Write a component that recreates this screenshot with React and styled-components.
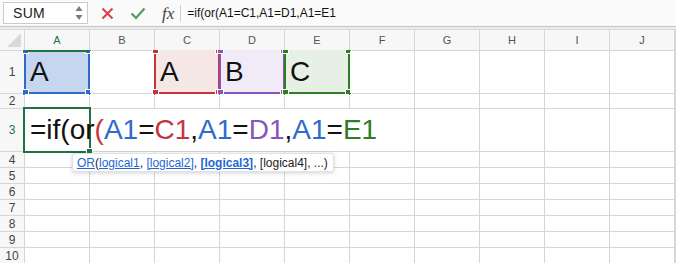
import React from 'react'
import styled, { createGlobalStyle, css } from 'styled-components'

const GlobalStyle = createGlobalStyle`
  html, body {
    margin: 0;
    padding: 0;
    background: #ffffff;
    font-family: "Liberation Sans", Arial, sans-serif;
    overflow: hidden;
  }
`;

const colors = {
  blue: '#2f6cc8',
  red: '#c8333b',
  purple: '#8656bd',
  green: '#2f7d24',
  active: '#1f7244',
};

const columns = ['A', 'B', 'C', 'D', 'E', 'F', 'G', 'H', 'I', 'J'];

function Range({ color, fill }) {
  return (
    <Highlight $color={color} $fill={fill}>
      <Handle $color={color} $v="top" $h="left" />
      <Handle $color={color} $v="top" $h="right" />
      <Handle $color={color} $v="bottom" $h="left" />
      <Handle $color={color} $v="bottom" $h="right" />
    </Highlight>
  );
}

function App() {
  return (
    <Page>
      <GlobalStyle />
      <FormulaBar>
        <NameBox>
          <span>SUM</span>
          <svg width="8" height="16" viewBox="0 0 8 16">
            <path d="M4 1 L7.5 6 L0.5 6 Z" fill="#7a7a7a" />
            <path d="M4 15 L7.5 10 L0.5 10 Z" fill="#7a7a7a" />
          </svg>
        </NameBox>
        <Actions>
          <svg width="13" height="13" viewBox="0 0 13 13">
            <path d="M1.5 1.5 L11.5 11.5 M11.5 1.5 L1.5 11.5" stroke="#d94147" strokeWidth="2" fill="none" />
          </svg>
          <svg width="16" height="13" viewBox="0 0 16 13">
            <path d="M1.5 6.5 L6 11 L14.5 1.5" stroke="#4f9d54" strokeWidth="2.2" fill="none" />
          </svg>
          <Fx>fx</Fx>
        </Actions>
        <FormulaInput>=if(or(A1=C1,A1=D1,A1=E1</FormulaInput>
      </FormulaBar>
      <Divider />
      <Sheet>
        <Corner>
          <svg width="16" height="16" viewBox="0 0 16 16">
            <path d="M15 1 L15 15 L1 15 Z" fill="#d9d9d9" />
          </svg>
        </Corner>
        {columns.map((c) => (
          <ColHeader key={c} $active={c === 'A'}>{c}</ColHeader>
        ))}

        <RowHeader>1</RowHeader>
        <Cell>
          <Range color={colors.blue} fill="#c6d6ef" />
          <BigText>A</BigText>
        </Cell>
        <Cell />
        <Cell>
          <Range color={colors.red} fill="#f6e7e7" />
          <BigText>A</BigText>
        </Cell>
        <Cell>
          <Range color={colors.purple} fill="#f0ebf7" />
          <BigText>B</BigText>
        </Cell>
        <Cell>
          <Range color={colors.green} fill="#e6f0e4" />
          <BigText>C</BigText>
        </Cell>
        {columns.slice(5).map((c) => <Cell key={c} />)}

        <RowHeader>2</RowHeader>
        {columns.map((c) => <Cell key={c} />)}

        <RowHeader $active>3</RowHeader>
        <OverflowCell>
          <ActiveBox>
            <Handle $color={colors.active} $v="bottom" $h="right" />
          </ActiveBox>
          <BigText>
            =if(or<C $c={colors.red}>(</C>
            <C $c={colors.blue}>A1</C>=<C $c={colors.red}>C1</C>,
            <C $c={colors.blue}>A1</C>=<C $c={colors.purple}>D1</C>,
            <C $c={colors.blue}>A1</C>=<C $c={colors.green}>E1</C>
          </BigText>
          <Tooltip>
            <Link>OR</Link>(<Link>logical1</Link>, <Link>[logical2]</Link>,{' '}
            <Link $bold>[logical3]</Link>, [logical4], ...)
          </Tooltip>
        </OverflowCell>
        {columns.slice(6).map((c) => <Cell key={c} />)}

        {[4, 5, 6, 7, 8, 9, 10].map((r) => (
          <React.Fragment key={r}>
            <RowHeader>{r}</RowHeader>
            {columns.map((c) => <Cell key={c} />)}
          </React.Fragment>
        ))}
      </Sheet>
    </Page>
  );
}

export default App

const Page = styled.div`
  width: 676px;
  height: 264px;
  overflow: hidden;
  background: #ffffff;
`;

const FormulaBar = styled.div`
  height: 27px;
  box-sizing: border-box;
  display: flex;
  align-items: center;
  padding: 0 0 0 3px;
  background: #fafafa;
  border-bottom: 1px solid #c4c4c4;
`;

const NameBox = styled.div`
  width: 85px;
  height: 22px;
  box-sizing: border-box;
  border: 1px solid #cbcbcb;
  background: #ffffff;
  display: flex;
  align-items: center;
  justify-content: space-between;
  padding: 0 4px 0 9px;
  font-size: 14px;
  letter-spacing: 0.3px;
  color: #222;
`;

const Actions = styled.div`
  display: flex;
  align-items: center;
  margin-left: 13px;
  height: 100%;

  svg:nth-child(1) { margin-right: 16px; }
  svg:nth-child(2) { margin-right: 16px; }
`;

const Fx = styled.span`
  font-family: "Liberation Serif", "Times New Roman", serif;
  font-style: italic;
  font-size: 17px;
  color: #444;
  padding-right: 6px;
  border-right: 1px solid #d0d0d0;
  line-height: 17px;
`;

const FormulaInput = styled.div`
  flex: 1;
  font-size: 12px;
  color: #111;
  padding-left: 6px;
`;

const Divider = styled.div`
  height: 2px;
  background: #ececec;
  border-bottom: 1px solid #d6d6d6;
`;

const Sheet = styled.div`
  display: grid;
  grid-template-columns: 24px repeat(10, 64px);
  grid-template-rows: 20px 42px 14px 42px repeat(7, 15px);
  gap: 1px;
  background: #d6d6d6;
  width: 676px;
`;

const headerBase = css`
  background: #f7f7f7;
  font-size: 11px;
  color: #555;
  display: flex;
  align-items: center;
`;

const Corner = styled.div`
  ${headerBase}
  align-items: flex-end;
  justify-content: flex-end;
  padding: 0 2px 2px 0;
  box-sizing: border-box;
`;

const ColHeader = styled.div`
  ${headerBase}
  justify-content: center;
  position: relative;
  z-index: 2;
  ${(p) => p.$active && css`
    color: ${colors.active};
    box-shadow: 0 2px 0 ${colors.active};
  `}
`;

const RowHeader = styled.div`
  ${headerBase}
  font-size: 12px;
  justify-content: center;
  color: ${(p) => (p.$active ? colors.active : '#444')};
`;

const Cell = styled.div`
  background: #ffffff;
  position: relative;
  display: flex;
  align-items: center;
`;

const OverflowCell = styled(Cell)`
  grid-column: span 6;
  z-index: 3;
`;

const BigText = styled.span`
  position: relative;
  font-size: 28px;
  color: #111;
  padding-left: 5px;
  white-space: nowrap;
  line-height: 1;
`;

const C = styled.span`
  color: ${(p) => p.$c};
`;

const Highlight = styled.div`
  position: absolute;
  inset: -1px;
  background: ${(p) => p.$fill};
  border: 2px solid ${(p) => p.$color};
  border-top: none;
  box-sizing: border-box;
`;

const Handle = styled.div`
  position: absolute;
  width: 5px;
  height: ${(p) => (p.$v === 'top' ? '3px' : '5px')};
  ${(p) => (p.$v === 'top' ? 'top: 0;' : 'bottom: -4px;')}
  ${(p) => (p.$h === 'left' ? 'left: -4px;' : 'right: -4px;')}
  background: ${(p) => p.$color};
  border: 1px solid #fff;
  border-top: ${(p) => (p.$v === 'top' ? 'none' : '1px solid #fff')};
`;

const ActiveBox = styled.div`
  position: absolute;
  left: -2px;
  top: -2px;
  bottom: -2px;
  width: 68px;
  border: 2px solid ${colors.active};
  box-sizing: border-box;
`;

const Tooltip = styled.div`
  position: absolute;
  left: 47px;
  top: calc(100% + 2px);
  height: 19px;
  box-sizing: border-box;
  padding: 0 5px 0 4px;
  display: flex;
  align-items: center;
  white-space: pre;
  background: #ffffff;
  border: 1px solid #e2e2e2;
  border-radius: 3px;
  box-shadow: 0 1px 4px rgba(0, 0, 0, 0.18);
  font-size: 12px;
  color: #222;
  z-index: 5;
`;

const Link = styled.span`
  color: #1f67d2;
  text-decoration: underline;
  font-weight: ${(p) => (p.$bold ? 700 : 400)};
`;
